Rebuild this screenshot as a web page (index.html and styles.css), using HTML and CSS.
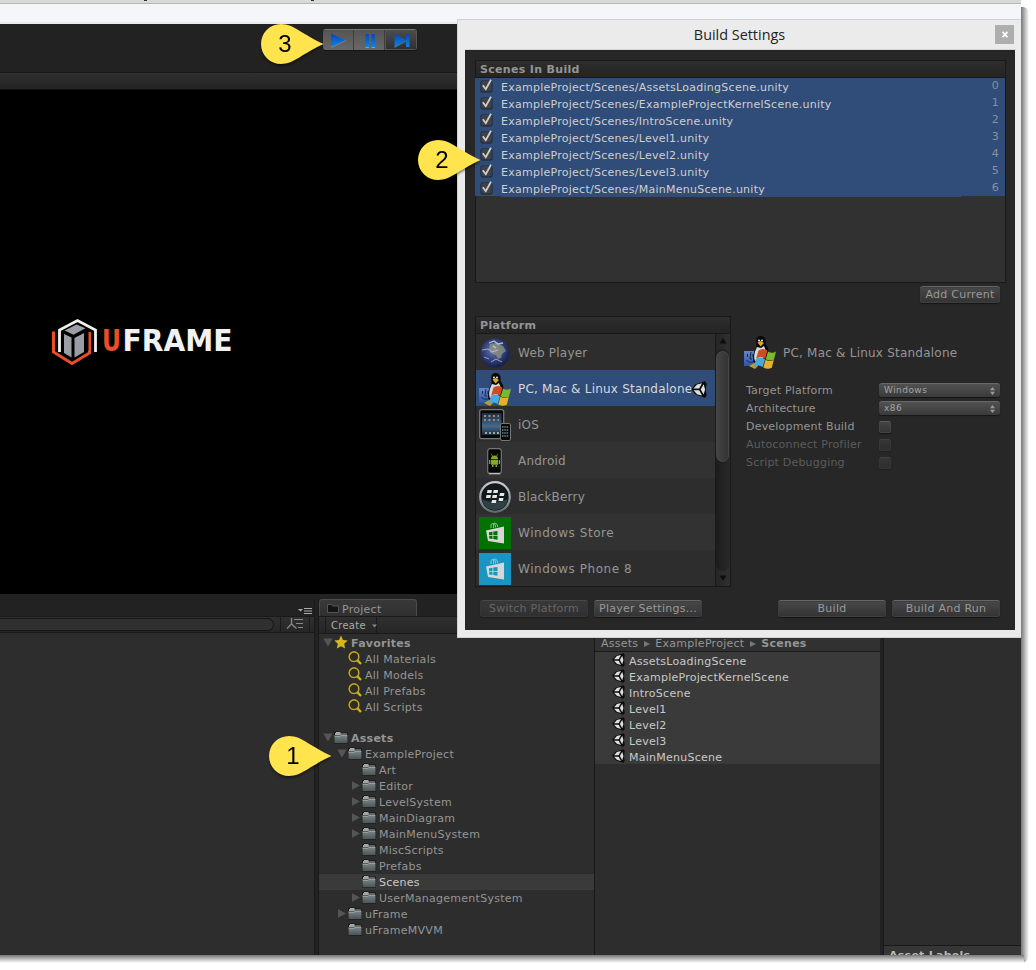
FILE: index.html
```html
<!DOCTYPE html>
<html lang="en">
<head>
<meta charset="utf-8">
<title>Build Settings</title>
<link rel="stylesheet" href="styles.css">
</head>
<body>
<svg class="defs" width="0" height="0">
  <defs>
    <linearGradient id="blue" x1="0" y1="0" x2="0" y2="1"><stop offset="0" stop-color="#0b43b5"/><stop offset="1" stop-color="#0a86e6"/></linearGradient>
    <linearGradient id="fold" x1="0" y1="0" x2="0" y2="1"><stop offset="0" stop-color="#7d8789"/><stop offset="1" stop-color="#4a5557"/></linearGradient>
    <radialGradient id="globe" cx=".45" cy=".4" r=".6"><stop offset="0" stop-color="#6d7fb0"/><stop offset=".6" stop-color="#2f3d78"/><stop offset="1" stop-color="#171e4c"/></radialGradient>
    <linearGradient id="sky" x1="0" y1="0" x2="0" y2="1"><stop offset="0" stop-color="#1d2c3c"/><stop offset=".6" stop-color="#45698c"/><stop offset="1" stop-color="#1d2b3c"/></linearGradient>
    <linearGradient id="ring" x1="0" y1="0" x2="0" y2="1"><stop offset="0" stop-color="#c9cdcf"/><stop offset=".5" stop-color="#9ba3a6"/><stop offset="1" stop-color="#5e6b70"/></linearGradient>
    <linearGradient id="finder" x1="0" y1="0" x2="0" y2="1"><stop offset="0" stop-color="#6486c8"/><stop offset="1" stop-color="#2f55a0"/></linearGradient>
  </defs>
  <symbol id="folder" viewBox="0 0 14 13">
    <path d="M0 3V1.500L1.500 .5h5L8 1.500h6v11H0z" fill="#191919"/>
    <path d="M1 3V2h1V1h4.500v1.500H13V4H1z" fill="#a3a6a6"/>
    <path d="M.5 4h13v8H.5z" fill="url(#fold)"/>
    <path d="M1 4.500h5l1-1h6" fill="none" stroke="#2a2e2f" stroke-width=".6"/>
    <path d="M.7 5.300h5.500l1-1h6" fill="none" stroke="#a0aaac" stroke-width=".9"/>
  </symbol>
  <symbol id="glass" viewBox="0 0 14 14">
    <circle cx="6" cy="5.700" r="4.900" fill="none" stroke="#191919" stroke-width="2.600" opacity=".6"/>
    <circle cx="6" cy="5.700" r="4.800" fill="none" stroke="#c1a21c" stroke-width="1.700"/>
    <path d="M9.300 9.200L13 13" stroke="#d0b020" stroke-width="2.400"/>
  </symbol>
  <symbol id="unity" viewBox="0 0 16 17">
    <path d="M.2 8.300L4.500 3.200 14 .3 15.600 2.500 14.800 8.500 15.600 14.500 14 16.800 4.500 13.600z" fill="#0a0a0a"/>
    <path d="M2.500 7.500L6 3.600 11 2.300 8.200 7.500zM2.500 9.300h5.700L11 14.500 6 13.200zM12.600 3.300l1.500 5.200-1.500 5.100L9.700 8.400z" fill="#dedede"/>
  </symbol>
  <symbol id="check" viewBox="0 0 14 14">
    <rect x=".5" y="1.500" width="12" height="12" rx="2" fill="#1f2430"/>
    <rect x="1.200" y="2" width="10.600" height="10.500" rx="1.500" fill="#3f4146"/>
    <path d="M2.800 6.200l3 4L11 .8" fill="none" stroke="#cfcfcf" stroke-width="1.800"/>
  </symbol>
  <symbol id="down" viewBox="0 0 10 9"><path d="M.3 .5h9.400L5 8.500z" fill="#555"/></symbol>
  <symbol id="right" viewBox="0 0 9 9"><path d="M.5 .3v8.400L8.500 4.500z" fill="#555"/></symbol>
  <symbol id="pcmac" viewBox="0 0 32 33">
    <path d="M0 15h13v15H0z" fill="url(#finder)"/>
    <path d="M3.500 18v3M9 18v3M2.500 24c2 3 6 2.500 8 1M7 16l-1 7h2" fill="none" stroke="#14244d" stroke-width="1"/>
    <path d="M12.500 8c-1-6 1-8 4-8S22.500 2 21.500 8c3 4 4 8 2 11l-6 8H10c-2-5-.5-12 2.500-16z" fill="#070707"/>
    <path d="M13 11c-2 4-4 9-2 14l7-1 4-9-2-5-3 2z" fill="#d5d8dc"/>
    <path d="M13.500 6.500l3-1.500 3.500 2-3.500 3.500z" fill="#dfa814"/>
    <circle cx="15" cy="4.500" r="1" fill="#eee"/><circle cx="18" cy="4.500" r="1" fill="#eee"/>
    <path d="M5 30l7-4 2 4-3 3z" fill="#cc971c"/>
    <path d="M14.500 14.500c3-2 6-2 9 0l-2.300 8c-3-2-6-2-9 0z" fill="#d24a20"/>
    <path d="M24 15.500c3 1.800 5.500 1.500 8 0l-2 8c-2.500 1.500-5.500 1.200-8.200-.3z" fill="#79b82f"/>
    <path d="M12 23c3-2 6-1.700 9 0l-2.300 8c-3-2-6-2-9 0z" fill="#49a8de"/>
    <path d="M21.500 23.700c3 1.800 5.500 1.500 8.300.3l-2 7.800c-3 1.500-5.700 1.200-8.500-.3z" fill="#e6b02a"/>
  </symbol>
  <symbol id="store" viewBox="0 0 32 32">
    <path d="M12 11V8c0-2 4.500-2 4.500 1v1.500M14.500 11V7c.5-1.500 4-1 4 2v1" fill="none" stroke="#c8d6dc" stroke-width="1" opacity=".7"/>
    <path d="M7 13.500L25 9.500v17L9 24z" fill="#d6d6d6"/>
    <path d="M10 15.300l3.500-.6v3.300H10zM14.300 14.600l4.200-.7V18h-4.200zM10.200 18.700h3.300v3.200l-3.300-.4zM14.300 18.700h4.200v4l-4.200-.6z" fill="currentColor"/>
  </symbol>
  <symbol id="pin" viewBox="0 0 64 44">
    <path d="M20 0C33 0 42 11 62.500 20 42 29 33 40 20 40A20 20 0 0 1 20 0z" fill="#ffe44d"/>
  </symbol>
</svg>

<main class="desk">
  <div class="menu-strip"><i></i><i></i></div>
  <div class="tool-strip"></div>
  <div class="toolbar">
    <div class="play-group">
      <span><svg width="31" height="21"><path d="M8 3.500v14L23 10.500z" fill="url(#blue)"/><path d="M8 17.500l15-7" stroke="#8a8a8a" stroke-width=".8"/></svg></span>
      <span><svg width="31" height="21"><path d="M11.500 4H15v13h-3.500zM17.500 4H21v13h-3.500z" fill="url(#blue)"/><path d="M11.500 17.500H15M17.500 17.500H21" stroke="#999"/></svg></span>
      <span class="step"><svg width="31" height="21"><path d="M8.500 3.500v14l12-7zM20 4h3.500v13H20z" fill="url(#blue)"/><path d="M8.500 17.500l12-6.500" stroke="#777" stroke-width=".7"/></svg></span>
    </div>
  </div>
  <div class="view-bar"></div>
  <div class="game">
    <svg class="logo" width="190" height="54">
      <path d="M9.500 34V12L27.500 2.500 45.500 12V34" fill="none" stroke="#f1f1f1" stroke-width="2.800"/>
      <path d="M3.500 13.500v20.500l18.500 11.500 17.500-10.500V14" fill="none" stroke="#e94e24" stroke-width="3"/>
      <path d="M11.500 13L27.500 5l11 6V32.500L22 42.500 11.500 35z" fill="#000"/>
      <path d="M14.500 12.500l12-6 9 3.700-12 6.500z" fill="#9b9da4"/>
      <path d="M14 16l7.500 3.500v20L14 35zM24.500 20l9.500-5v19l-9.500 5.500z" fill="#9b9da4"/>
      <text class="accent" x="52" y="33" font-size="30" textLength="19" lengthAdjust="spacingAndGlyphs">U</text>
      <text x="72.500" y="33" font-size="30" textLength="110" lengthAdjust="spacingAndGlyphs">FRAME</text>
    </svg>
  </div>
  <div class="lower">
    <section class="left">
      <div class="tabs end"><svg width="14" height="8"><path d="M0 2h5L2.500 4.500z" fill="#aaa"/><path d="M6 1.500h8M6 4h8M6 6.500h8" stroke="#aaa"/></svg></div>
      <div class="bar"><div class="search"></div><div class="sort"><svg width="18" height="14"><path d="M5.500 0v6L1 10.500M5.500 6l5 4.500" fill="none" stroke="#888" stroke-width="1.300"/><path d="M8 1.500h9M10 5.500h7M12 9.500h5" stroke="#888"/></svg></div></div>
    </section>
    <section class="project">
      <div class="tabs"><div class="tab"><svg width="12" height="10"><path d="M.5 9.500v-8h4l1 1.500h6v6.500z" fill="#141414" stroke="#555"/></svg>Project</div></div>
      <div class="bar"><div class="create">Create<svg width="5" height="4"><path d="M0 .5h5L2.500 3.500z" fill="#888"/></svg></div></div>
      <div class="columns">
        <div class="tree">
          <div class="row d0 bold"><svg width="10" height="9"><use href="#down"/></svg><svg class="star" width="14" height="14" viewBox="0 0 14 14"><path d="M7 .5l2 4.400 4.700.6-3.500 3.200.9 4.700L7 11.200 2.900 13.400l.9-4.700L.3 5.500 5 4.900z" fill="#d9b71c"/></svg><span>Favorites</span></div>
          <div class="row f"><svg width="14" height="14"><use href="#glass"/></svg><span>All Materials</span></div>
          <div class="row f"><svg width="14" height="14"><use href="#glass"/></svg><span>All Models</span></div>
          <div class="row f"><svg width="14" height="14"><use href="#glass"/></svg><span>All Prefabs</span></div>
          <div class="row f"><svg width="14" height="14"><use href="#glass"/></svg><span>All Scripts</span></div>
          <div class="row d0 bold assets"><svg width="10" height="9"><use href="#down"/></svg><svg width="14" height="13"><use href="#folder"/></svg><span>Assets</span></div>
          <div class="row d1"><svg width="10" height="9"><use href="#down"/></svg><svg width="14" height="13"><use href="#folder"/></svg><span>ExampleProject</span></div>
          <div class="row d2"><i></i><svg width="14" height="13"><use href="#folder"/></svg><span>Art</span></div>
          <div class="row d2"><svg width="10" height="9"><use href="#right"/></svg><svg width="14" height="13"><use href="#folder"/></svg><span>Editor</span></div>
          <div class="row d2"><svg width="10" height="9"><use href="#right"/></svg><svg width="14" height="13"><use href="#folder"/></svg><span>LevelSystem</span></div>
          <div class="row d2"><svg width="10" height="9"><use href="#right"/></svg><svg width="14" height="13"><use href="#folder"/></svg><span>MainDiagram</span></div>
          <div class="row d2"><svg width="10" height="9"><use href="#right"/></svg><svg width="14" height="13"><use href="#folder"/></svg><span>MainMenuSystem</span></div>
          <div class="row d2"><i></i><svg width="14" height="13"><use href="#folder"/></svg><span>MiscScripts</span></div>
          <div class="row d2"><i></i><svg width="14" height="13"><use href="#folder"/></svg><span>Prefabs</span></div>
          <div class="row d2 on"><i></i><svg width="14" height="13"><use href="#folder"/></svg><span>Scenes</span></div>
          <div class="row d2"><svg width="10" height="9"><use href="#right"/></svg><svg width="14" height="13"><use href="#folder"/></svg><span>UserManagementSystem</span></div>
          <div class="row d1"><svg width="10" height="9"><use href="#right"/></svg><svg width="14" height="13"><use href="#folder"/></svg><span>uFrame</span></div>
          <div class="row d1"><i></i><svg width="14" height="13"><use href="#folder"/></svg><span>uFrameMVVM</span></div>
        </div>
        <div class="files">
          <div class="crumbs"><span>Assets</span><svg width="6" height="6"><path d="M0 0v6l6-3z" fill="#777"/></svg><span>ExampleProject</span><svg width="6" height="6"><path d="M0 0v6l6-3z" fill="#777"/></svg><b>Scenes</b></div>
          <div class="file-list">
            <div><svg width="13" height="14"><use href="#unity"/></svg><span>AssetsLoadingScene</span></div>
            <div><svg width="13" height="14"><use href="#unity"/></svg><span>ExampleProjectKernelScene</span></div>
            <div><svg width="13" height="14"><use href="#unity"/></svg><span>IntroScene</span></div>
            <div><svg width="13" height="14"><use href="#unity"/></svg><span>Level1</span></div>
            <div><svg width="13" height="14"><use href="#unity"/></svg><span>Level2</span></div>
            <div><svg width="13" height="14"><use href="#unity"/></svg><span>Level3</span></div>
            <div><svg width="13" height="14"><use href="#unity"/></svg><span>MainMenuScene</span></div>
          </div>
        </div>
      </div>
    </section>
    <section class="inspector"><div class="labels">Asset Labels</div></section>
  </div>

  <div class="dialog">
    <div class="title"><span>Build Settings</span><button class="close"><svg width="6" height="7"><path d="M.6 .8L5.400 6.200M5.400 .8L.6 6.200" stroke="#fff" stroke-width="1.700"/></svg></button></div>
    <div class="body">
      <div class="scenes">
        <div class="head">Scenes In Build</div>
        <div class="scene"><svg width="14" height="14"><use href="#check"/></svg><span>ExampleProject/Scenes/AssetsLoadingScene.unity</span><em>0</em></div>
        <div class="scene"><svg width="14" height="14"><use href="#check"/></svg><span>ExampleProject/Scenes/ExampleProjectKernelScene.unity</span><em>1</em></div>
        <div class="scene"><svg width="14" height="14"><use href="#check"/></svg><span>ExampleProject/Scenes/IntroScene.unity</span><em>2</em></div>
        <div class="scene"><svg width="14" height="14"><use href="#check"/></svg><span>ExampleProject/Scenes/Level1.unity</span><em>3</em></div>
        <div class="scene"><svg width="14" height="14"><use href="#check"/></svg><span>ExampleProject/Scenes/Level2.unity</span><em>4</em></div>
        <div class="scene"><svg width="14" height="14"><use href="#check"/></svg><span>ExampleProject/Scenes/Level3.unity</span><em>5</em></div>
        <div class="scene last"><svg width="14" height="14"><use href="#check"/></svg><span>ExampleProject/Scenes/MainMenuScene.unity</span><em>6</em></div>
        <div class="tail"></div>
      </div>
      <div class="add"><button class="btn">Add Current</button></div>
      <div class="middle">
        <div class="platforms">
          <div class="head">Platform</div>
          <div class="plat-body">
            <div class="plat-list">
              <div class="plat"><svg width="32" height="32"><circle cx="16" cy="16" r="14.500" fill="url(#globe)"/><path d="M11 7l7-1 6 3 3 5-4 3-1 4-3 1-2-4-5-2-2-4z" fill="#92957f" opacity=".75"/><path d="M3 13l6-1 4 3 6-2M12 25l5-3 6 3M5 20l5 2" stroke="#ccd2e0" fill="none" opacity=".7"/><path d="M10 6l5-2 4 3 5-1M14 9l3 2" stroke="#d4d8e2" stroke-width="1.300" fill="none" opacity=".8"/></svg>Web Player</div>
              <div class="plat on"><svg width="32" height="33"><use href="#pcmac"/></svg>PC, Mac &amp; Linux Standalone<svg class="cur" width="16" height="17"><use href="#unity"/></svg></div>
              <div class="plat"><svg width="32" height="32"><rect x=".7" y=".7" width="24" height="29" rx="2" fill="#080808" stroke="#777" stroke-width="1.300"/><rect x="3" y="4" width="19.500" height="22" fill="url(#sky)"/><path d="M5 7h15M5 11h15" stroke="#a08a80" stroke-width="2" stroke-dasharray="2 2.500"/><path d="M6 24h14" stroke="#9aa" stroke-width="2" stroke-dasharray="2 2"/><rect x="21.500" y="14.500" width="10" height="17" rx="1.500" fill="#080808" stroke="#777"/><path d="M23 18h7M23 21h7M23 24h7M23 27h7" stroke="#61879a" stroke-width="1.600" stroke-dasharray="1.500 .8"/></svg>iOS</div>
              <div class="plat alt"><svg width="32" height="32"><rect x="8.700" y="3.700" width="13.600" height="25" rx="2.500" fill="#050505" stroke="#777" stroke-width="1.200"/><path d="M10 28.500h11" stroke="#bbb" stroke-width="1.500"/><path d="M12 14a3.500 3.500 0 0 1 7 0zM12 14.800h7v5h-7zM10 15h1.300v4H10zM19.700 15H21v4h-1.300zM13 20h1.500v2H13zM16.500 20H18v2h-1.500z" fill="#83a728"/><path d="M12 9l1.500 2M19 9l-1.500 2" stroke="#83a728" stroke-width=".8"/></svg>Android</div>
              <div class="plat"><svg width="32" height="32"><circle cx="16" cy="16" r="14.800" fill="#11191c" stroke="url(#ring)" stroke-width="2.200"/><path d="M3 18c7 4 18 4 26 0-1 7-7 11-13 11S4 25 3 18z" fill="#314047"/><g fill="#e6e6e6"><path d="M8.500 9h4.500l-.6 3H7.900zM14.700 9h4.500l-.6 3h-4.500zM7.500 14H12l-.6 3H6.900zM13.700 14h4.500l-.6 3h-4.500zM21 12h4.500l-.6 3h-4.500zM20 17h4.500l-.6 3h-4.500zM13 19h4.500l-.6 3h-4.500z"/></g></svg>BlackBerry</div>
              <div class="plat alt wide"><svg class="green" width="32" height="32"><use href="#store"/></svg>Windows Store</div>
              <div class="plat wide"><svg class="cyan" width="32" height="32"><use href="#store"/></svg>Windows Phone 8</div>
            </div>
            <div class="scroll"><svg width="8" height="6"><path d="M.5 5.500h7L4 0z" fill="#0c0c0c"/></svg><div class="track"><div class="thumb"></div></div><svg width="8" height="6"><path d="M.5 .5h7L4 6z" fill="#0c0c0c"/></svg></div>
          </div>
        </div>
        <div class="options">
          <div class="opt-title"><svg width="32" height="33"><use href="#pcmac"/></svg>PC, Mac &amp; Linux Standalone</div>
          <div class="opt"><span>Target Platform</span><div class="select">Windows<svg width="5" height="8"><path d="M0 3.200h5L2.500 0zM0 4.800h5L2.500 8z" fill="#999"/></svg></div></div>
          <div class="opt"><span>Architecture</span><div class="select">x86<svg width="5" height="8"><path d="M0 3.200h5L2.500 0zM0 4.800h5L2.500 8z" fill="#999"/></svg></div></div>
          <div class="opt"><span>Development Build</span><i class="box"></i></div>
          <div class="opt dim"><span>Autoconnect Profiler</span><i class="box"></i></div>
          <div class="opt dim"><span>Script Debugging</span><i class="box"></i></div>
        </div>
      </div>
      <div class="actions">
        <button class="btn off">Switch Platform</button><button class="btn">Player Settings...</button><button class="btn push">Build</button><button class="btn">Build And Run</button>
      </div>
    </div>
  </div>

  <div class="pin p3"><svg width="64" height="44"><use href="#pin"/></svg><b>3</b></div>
  <div class="pin p2"><svg width="64" height="44"><use href="#pin"/></svg><b>2</b></div>
  <div class="pin p1"><svg width="64" height="44"><use href="#pin"/></svg><b>1</b></div>
</main>
<div class="shade-right"></div>
<div class="shade-bottom"></div>
</body>
</html>
```
FILE: styles.css
```css
* { box-sizing: border-box; }
html, body { margin: 0; width: 1036px; height: 970px; overflow: hidden; background: #fff; }
body { position: relative; font: 11px/16px "DejaVu Sans", Verdana, sans-serif; letter-spacing: .26px; color: #959595; white-space: nowrap; }
svg { display: block; flex: none; }
button { font: inherit; letter-spacing: inherit; color: inherit; padding: 0; margin: 0; border: 0; }
.defs { position: absolute; }

.desk { position: relative; width: 1021px; height: 955px; overflow: hidden; background: #222; display: flex; flex-direction: column; }
.menu-strip { height: 4px; flex: none; background: #d9d9d9; border-bottom: 1px solid #b5b5b5; display: flex; padding-left: 144px; gap: 164px; }
.menu-strip i { width: 3px; height: 1px; background: #333; }
.tool-strip { height: 20px; flex: none; background: #f4f6f9; border-bottom: 2px solid #e9eaeb; }
.toolbar { height: 48px; flex: none; background: #222; padding: 5px 0 0 323px; }
.play-group { display: flex; width: 94px; height: 21px; border-radius: 3px; overflow: hidden; border-top: 1px solid #777; box-shadow: 0 1px 1px #151515; }
.play-group span { width: 31px; background: linear-gradient(#555, #686868); border-right: 1px solid #3c3c3c; }
.play-group .step { width: 32px; background: linear-gradient(#4c4c4c, #303030); border: 1px solid #555; border-top: 0; }
.view-bar { height: 18px; flex: none; background: linear-gradient(#303030, #242424); border-top: 1px solid #181818; border-bottom: 1px solid #101010; }
.game { height: 504px; flex: none; background: #000; padding: 228px 0 0 50px; }
.logo text { font-family: "DejaVu Sans", sans-serif; font-weight: bold; letter-spacing: 0; fill: #f1f1f1; }
.logo .accent { fill: #e94e24; }

.lower { flex: 1; display: flex; padding-top: 5px; min-height: 0; }
.left { width: 315px; flex: none; background: #2d2d2d; border-right: 1px solid #191919; }
.tabs { height: 17px; background: #222; display: flex; }
.end { justify-content: flex-end; padding: 8px 2px 0 0; }
.bar { height: 17px; background: linear-gradient(#303030, #262626); border-top: 1px solid #1a1a1a; border-bottom: 1px solid #191919; display: flex; }
.search { width: 274px; height: 13px; margin-top: 1px; border: 1px solid #151515; border-left: 0; border-radius: 0 7px 7px 0; background: #303030; }
.sort { margin-left: 6px; padding: 1px 5px 0; border-left: 1px solid #1b1b1b; border-right: 1px solid #1b1b1b; }
.project { width: 562px; flex: none; margin-left: 3px; display: flex; flex-direction: column; border-left: 1px solid #191919; }
.tab { width: 98px; height: 17px; background: linear-gradient(#393939, #303030); border: 1px solid #4b4b4b; border-bottom: 0; border-radius: 3px 3px 0 0; padding: 3px 0 0 7px; display: flex; gap: 3px; line-height: 13px; }
.project .bar { padding-left: 6px; height: 18px; }
.create { width: 52px; border-left: 1px solid #1b1b1b; border-right: 1px solid #1b1b1b; padding: 2px 0 0 5px; display: flex; align-items: center; gap: 6px; font-size: 10px; color: #aaa; }
.columns { flex: 1; display: flex; background: #2d2d2d; }
.tree { width: 276px; padding-top: 1px; border-right: 1px solid #191919; }
.row { height: 16px; display: flex; align-items: center; }
.row > i { width: 10px; }
.row > span { padding-top: 2px; }
.row > svg:nth-last-child(2) { margin: -2px 3px 0 1px; }
.row > svg:nth-last-child(3) { margin-top: -1px; }
.d0 { padding-left: 4px; }
.d1 { padding-left: 18px; }
.d2 { padding-left: 32px; }
.row.f > svg:nth-last-child(2) { margin: -3px 3px 0 29px; }
.bold { font-weight: bold; }
.assets { margin-top: 15px; }
.tree .on { background: #3a3a3a; color: #c9c9c9; height: 16px; }
.files { width: 285px; }
.crumbs { height: 18px; padding: 3px 0 0 6px; border-bottom: 1px solid #191919; background: #313131; display: flex; align-items: center; gap: 5px; }
.crumbs svg { margin-left: 1px; }
.file-list { background: #3a3a3a; color: #c9c9c9; padding-top: 1px; height: 112px; }
.file-list div { height: 16px; display: flex; align-items: center; padding-left: 17px; gap: 4px; }
.file-list svg { margin-top: -2px; }
.file-list span { padding-top: 2px; }
.inspector { flex: 1; margin-left: 3px; border-left: 1px solid #191919; background: #2d2d2d; padding-top: 346px; }
.labels { height: 20px; background: #363636; border-top: 1px solid #191919; font-weight: bold; padding: 2px 0 0 5px; color: #b8b8b8; }

.dialog { position: absolute; left: 457px; top: 19px; width: 564px; height: 619px; padding: 0 5px 7px 7px; background: #ebebeb; border: 1px solid #d0d2d4; border-right: 0; }
.title { height: 30px; position: relative; text-align: center; font: 14.4px/30px "Open Sans", "Noto Sans", sans-serif; letter-spacing: 0; color: #222; border-bottom: 1px solid #d4d4d4; }
.title span { position: relative; left: -1px; }
.close { position: absolute; right: 2px; top: 5px; width: 19px; height: 19px; background: #aeaeae; display: flex; align-items: center; justify-content: center; }
.body { height: 580px; width: 550px; background: #272727; padding: 10px 15px 0 10px; }
.scenes { width: 531px; height: 223px; background: #313131; border: 1px solid #191919; }
.head { height: 17px; background: linear-gradient(#2d2d2d, #242424); border-bottom: 1px solid #191919; padding-left: 4px; font-weight: bold; line-height: 17px; letter-spacing: .32px; }
.scene { height: 17px; margin-left: -1px; background: #304c78; display: flex; padding-left: 5px; }
.scene.last { height: 16px; }
.scene svg { margin-top: 1px; }
.scene span { margin-left: 7px; line-height: 20px; color: #cfcfcf; }
.scene em { margin-left: auto; padding-right: 6px; font-style: normal; line-height: 16px; color: #8b8f98; }
.tail { width: 460px; height: 1px; margin-left: 25px; background: #304c78; }
.btn { width: 108px; height: 17px; border-radius: 3px; background: linear-gradient(#484848, #333); border-top: 1px solid #666; box-shadow: 0 1px 1px #161616, inset 0 0 0 1px #3f3f3f; line-height: 15px; color: #999; }
.add { padding-top: 3px; display: flex; justify-content: flex-end; }
.add .btn { width: 80px; line-height: 14px; }
.middle { display: flex; margin-top: 13px; }
.platforms { width: 256px; height: 271px; border: 1px solid #191919; }
.plat-body { display: flex; }
.plat-list { width: 239px; }
.plat { height: 36px; background: #2d2d2d; display: flex; align-items: center; gap: 7px; padding: 2px 0 0 3px; font-size: 12px; letter-spacing: .22px; }
.wide { letter-spacing: .55px; }
.alt { background: #323232; }
.plat.on { background: #304c78; color: #d8d8d8; }
.cur { margin-left: -8px; }
.green { background: #007200; color: #007200; }
.cyan { background: #1a95c1; color: #1a95c1; }
.scroll { flex: 1; border-left: 1px solid #191919; background: linear-gradient(90deg, #252525, #303030); display: flex; flex-direction: column; align-items: center; justify-content: space-between; padding: 4px 0 5px; height: 252px; }
.track { width: 14px; height: 222px; border-radius: 7px; background: linear-gradient(90deg, #1c1c1c, #292929); }
.thumb { width: 13px; height: 111px; margin-top: 2px; border: 1px solid #474747; border-radius: 7px; background: linear-gradient(90deg, #444, #333); }
.options { padding: 20px 0 0 13px; flex: 1; }
.opt-title { display: flex; align-items: center; gap: 7px; font-size: 12px; letter-spacing: .22px; height: 33px; margin-bottom: 12px; }
.opt { height: 18px; display: flex; align-items: center; padding-left: 2px; letter-spacing: .2px; }
.opt > span { width: 133px; padding-top: 2px; }
.select { width: 121px; height: 14px; border-radius: 3px; border-top: 1px solid #686868; background: linear-gradient(#515151, #3a3a3a); box-shadow: 0 1px 1px #161616; display: flex; align-items: center; justify-content: space-between; padding: 0 5px 2px; font-size: 9px; letter-spacing: .45px; color: #a5a5a5; }
.select svg { margin-top: 2px; }
.box { width: 12px; height: 12px; border-radius: 2px; margin-top: 2px; border: 1px solid #454545; border-top-color: #5c5c5c; background: linear-gradient(#444, #353535); box-shadow: 0 1px 1px #171717; }
.dim { color: #5c5c5c; }
.dim .box { opacity: .5; }
.actions { display: flex; gap: 6px; margin: 13px 0 0 5px; }
.actions .btn { line-height: 14px; }
.push { margin-left: 70px; }
.btn.off { color: #666; background: linear-gradient(#383838, #2f2f2f); border-top-color: #484848; box-shadow: 0 1px 1px #1c1c1c, inset 0 0 0 1px #363636; }

.pin { position: absolute; width: 64px; height: 44px; filter: drop-shadow(0 2px 1px rgba(0,0,0,.45)); }
.pin b { position: absolute; left: 0; top: 6px; width: 48px; text-align: center; font: 24px/27px "Liberation Sans", Arial, sans-serif; letter-spacing: 0; color: #000; }
.p3 { left: 261px; top: 24px; }
.p2 { left: 418px; top: 140px; }
.p1 { left: 269px; top: 736px; }
.shade-right { position: absolute; left: 1021px; top: 7px; width: 8px; height: 956px; background: linear-gradient(90deg, #777, #fff); border-radius: 0 6px 8px 0; }
.shade-bottom { position: absolute; left: 0; top: 955px; width: 1024px; height: 8px; background: linear-gradient(#777, #fff); }
```
